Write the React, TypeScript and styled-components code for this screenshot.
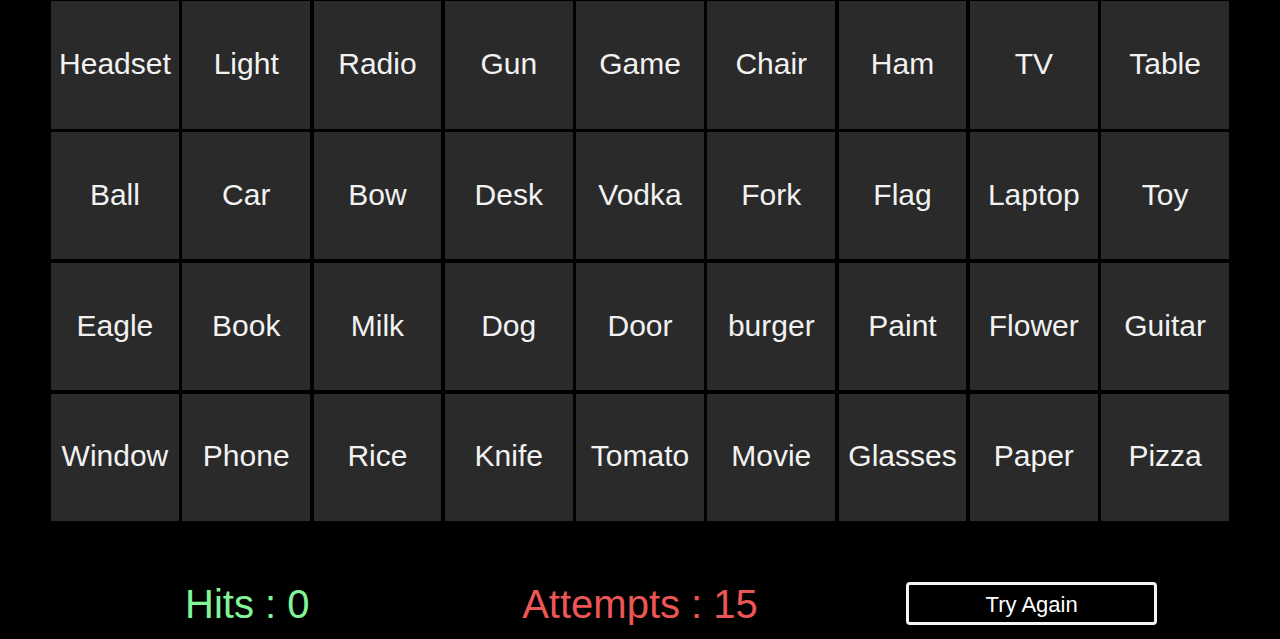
import React from "react";
import styled, { createGlobalStyle } from "styled-components";

const Global = createGlobalStyle`
  html, body { margin: 0; padding: 0; background: #000; }
  body { font-family: "Liberation Sans", Arial, sans-serif; overflow: hidden; }
`;

const Page = styled.div`
  width: 1178px;
  margin: 0 auto;
  padding-top: 1px;
`;

const Board = styled.div`
  display: grid;
  grid-template-columns: repeat(9, 1fr);
  grid-auto-rows: 127.5px;
  column-gap: 3.4px;
  row-gap: 3.4px;
`;

const Card = styled.div`
  background: #2a2a2a;
  color: #f2f2f2;
  display: flex;
  align-items: center;
  justify-content: center;
  font-size: 30px;
  white-space: nowrap;
  padding-bottom: 2px;
`;

const Footer = styled.div`
  display: grid;
  grid-template-columns: repeat(3, 1fr);
  align-items: center;
  margin-top: 60px;
  height: 44px;
`;

const Stat = styled.div<{ $color: string }>`
  text-align: center;
  font-size: 40px;
  line-height: 44px;
  padding-top: 1px;
  color: ${(p) => p.$color};
`;

const Cell = styled.div`
  display: flex;
  justify-content: center;
`;

const Button = styled.button`
  width: 251px;
  height: 43px;
  box-sizing: border-box;
  background: #000;
  color: #fff;
  border: 3px solid #f4f4f4;
  border-radius: 4px;
  font-family: "Liberation Sans", Arial, sans-serif;
  font-size: 22px;
  padding: 3px 0 0;
  margin-left: -2px;
`;

const words = [
  "Headset", "Light", "Radio", "Gun", "Game", "Chair", "Ham", "TV", "Table",
  "Ball", "Car", "Bow", "Desk", "Vodka", "Fork", "Flag", "Laptop", "Toy",
  "Eagle", "Book", "Milk", "Dog", "Door", "burger", "Paint", "Flower", "Guitar",
  "Window", "Phone", "Rice", "Knife", "Tomato", "Movie", "Glasses", "Paper", "Pizza",
];

export default function App() {
  return (
    <>
      <Global />
      <Page>
        <Board>
          {words.map((w, i) => (
            <Card key={i}>{w}</Card>
          ))}
        </Board>
        <Footer>
          <Stat $color="#80f59a">Hits : 0</Stat>
          <Stat $color="#ec5656">Attempts : 15</Stat>
          <Cell>
            <Button>Try Again</Button>
          </Cell>
        </Footer>
      </Page>
    </>
  );
}
